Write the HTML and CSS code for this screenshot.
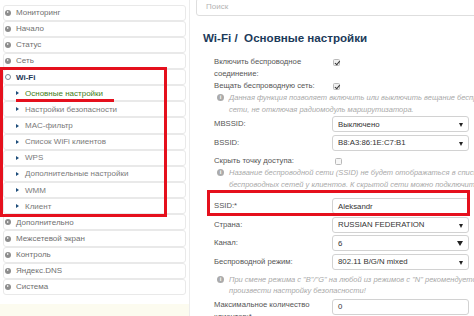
FILE: index.html
```html
<!DOCTYPE html>
<html lang="ru">
<head>
<meta charset="utf-8">
<title>Wi-Fi / Основные настройки</title>
<link rel="stylesheet" href="styles.css">
</head>
<body>
<div class="page">
  <nav class="sidebar">
    <div class="item top"><span class="ico-c"></span>Мониторинг</div>
    <div class="item top"><span class="ico-c"></span>Начало</div>
    <div class="item top"><span class="ico-c"></span>Статус</div>
    <div class="item top"><span class="ico-c"></span>Сеть</div>
    <div class="item top open"><span class="ico-c"></span>Wi-Fi</div>
    <div class="item sub active"><span class="ico-t"></span>Основные настройки</div>
    <div class="item sub"><span class="ico-t"></span>Настройки безопасности</div>
    <div class="item sub"><span class="ico-t"></span>MAC-фильтр</div>
    <div class="item sub"><span class="ico-t"></span>Список WiFi клиентов</div>
    <div class="item sub"><span class="ico-t"></span>WPS</div>
    <div class="item sub"><span class="ico-t"></span>Дополнительные настройки</div>
    <div class="item sub"><span class="ico-t"></span>WMM</div>
    <div class="item sub"><span class="ico-t"></span>Клиент</div>
    <div class="item top"><span class="ico-c"></span>Дополнительно</div>
    <div class="item top"><span class="ico-c"></span>Межсетевой экран</div>
    <div class="item top"><span class="ico-c"></span>Контроль</div>
    <div class="item top"><span class="ico-c"></span>Яндекс.DNS</div>
    <div class="item top"><span class="ico-c"></span>Система</div>
    <div class="side-foot"></div>
  </nav>
  <main class="content">
    <div class="search">Поиск</div>
    <h1 class="title">Wi-Fi /&nbsp; Основные настройки</h1>

    <div class="row r1">
      <div class="label">Включить беспроводное<br>соединение:</div>
      <div class="field"><span class="cb checked"></span></div>
    </div>
    <div class="row r2">
      <div class="label">Вещать беспроводную сеть:</div>
      <div class="field"><span class="cb checked"></span></div>
    </div>
    <div class="info i1"><span class="ii">i</span><p>Данная функция позволяет включить или выключить вещание беспроводной<br>сети, не отключая радиомодуль маршрутизатора.</p></div>

    <div class="row sel first">
      <div class="label">MBSSID:</div>
      <div class="select">Выключено<span class="arr"></span></div>
    </div>
    <div class="row sel">
      <div class="label">BSSID:</div>
      <div class="select">B8:A3:86:1E:C7:B1<span class="arr"></span></div>
    </div>
    <div class="row r-hide">
      <div class="label">Скрыть точку доступа:</div>
      <div class="field"><span class="cb off"></span></div>
    </div>
    <div class="info i2"><span class="ii">i</span><p>Название беспроводной сети (SSID) не будет отображаться в списке доступных<br>беспроводных сетей у клиентов. К скрытой сети можно подключиться, только<br>указав SSID вручную на беспроводном устройстве.</p></div>

    <div class="row sel ssid">
      <div class="label">SSID:*</div>
      <div class="select input">Aleksandr</div>
    </div>
    <div class="row sel">
      <div class="label">Страна:</div>
      <div class="select">RUSSIAN FEDERATION<span class="arr"></span></div>
    </div>
    <div class="row sel">
      <div class="label">Канал:</div>
      <div class="select">6<span class="arr big"></span></div>
    </div>
    <div class="row sel">
      <div class="label">Беспроводной режим:</div>
      <div class="select">802.11 B/G/N mixed<span class="arr"></span></div>
    </div>
    <div class="info i3"><span class="ii">i</span><p>При смене режима с "B"/"G" на любой из режимов с "N" рекомендуется<br>произвести настройку безопасности!</p></div>
    <div class="row r-max">
      <div class="label">Максимальное количество<br>клиентов:*</div>
      <div class="select input">0</div>
    </div>
  </main>

  <div class="mark mark-menu"></div>
  <div class="mark-line"></div>
  <div class="mark mark-ssid"></div>
</div>
</body>
</html>
```

FILE: styles.css
```css
* { box-sizing: border-box; }
html, body { margin: 0; padding: 0; background: #fff; }
body {
  font-family: "Liberation Sans", Arial, sans-serif;
  color: #555;
  width: 474px;
  height: 316px;
  overflow: hidden;
}
.page {
  position: relative;
  display: flex;
  width: 474px;
  height: 316px;
  overflow: hidden;
}

/* ---------- sidebar ---------- */
.sidebar {
  width: 190px;
  flex: none;
  border-right: 1px solid #ececec;
  padding: 4.5px 3px 0 3px;
  display: flex;
  flex-direction: column;
}
.item {
  height: 16.25px;
  border: 1px solid #e9e9e9;
  border-radius: 3px;
  display: flex;
  align-items: center;
  font-size: 8px;
  color: #707070;
  white-space: nowrap;
}
.item.top { padding-left: 1px; }
.item.sub { padding-left: 12px; color: #7a7a7a; }
.ico-c {
  width: 6px; height: 6px;
  border-radius: 50%;
  background: #8d8d8d;
  margin-right: 5px;
  position: relative;
  flex: none;
}
.ico-c::after {
  content: "";
  position: absolute;
  left: 2px; top: 1.5px;
  border-left: 2.5px solid #fff;
  border-top: 1.5px solid transparent;
  border-bottom: 1.5px solid transparent;
}
.item.open { font-weight: bold; color: #1e3656; }
.item.open .ico-c { background: #fff; border: 1.5px solid #7d8a98; }
.item.open .ico-c::after { display: none; }
.ico-t {
  width: 0; height: 0;
  border-left: 3px solid #1d4c7a;
  border-top: 2px solid transparent;
  border-bottom: 2px solid transparent;
  margin-right: 6px;
  flex: none;
}
.item.active { color: #3f7d17; }
.side-foot {
  margin-top: 9px;
  height: 12px;
  background: #fcfbef;
  margin-left: -3px;
  margin-right: -3px;
}

/* ---------- content ---------- */
.content {
  flex: 1;
  padding-left: 6px;
  min-width: 0;
}
.search {
  height: 18px;
  margin-top: -2px;
  margin-right: -6px;
  border: 1px solid #dedede;
  border-radius: 3px;
  font-size: 8px;
  color: #b3b3b3;
  padding: 3px 0 0 9px;
}
.title {
  margin: 14px 0 0 7px;
  height: 16px;
  line-height: 16px;
  font-size: 11.6px;
  font-weight: bold;
  color: #1c3a5a;
  white-space: nowrap;
}
.row {
  display: grid;
  grid-template-columns: 118px 137px;
  padding-left: 18px;
  font-size: 7.7px;
  color: #555;
}
.label { line-height: 12px; white-space: nowrap; }
.r1 { margin-top: 10px; height: 24px; }
.r2 { height: 12px; }
.field { display: flex; align-items: flex-start; }
.cb {
  width: 7px; height: 7px;
  margin-top: 2.5px;
  border: 1px solid #b9b9b9;
  border-radius: 1.5px;
  background: #f0f0f0;
  position: relative;
}
.cb.checked { margin-left: 1px; }
.cb.checked::after {
  content: "";
  position: absolute;
  left: 1.5px; top: 0;
  width: 2px; height: 3.5px;
  border-right: 1.3px solid #333;
  border-bottom: 1.3px solid #333;
  transform: rotate(40deg);
}
.cb.off { margin-left: 3px; background: #f7f7f7; }

.info {
  display: flex;
  padding-left: 21px;
  font-size: 7.5px;
  font-style: italic;
  color: #a9a9a9;
  white-space: nowrap;
}
.info p { margin: 0; line-height: 11.5px; }
.ii {
  flex: none;
  width: 7px; height: 7px;
  margin-top: 2px;
  margin-right: 5px;
  border-radius: 50%;
  background: #ababab;
  color: #fff;
  font-size: 6px;
  font-style: normal;
  font-weight: bold;
  line-height: 7px;
  text-align: center;
}
.i1 { height: 24px; }
.i2 { height: 25px; overflow: hidden; }
.i2 p { line-height: 12px; }
.i3 { margin-top: 4px; height: 24px; }

.row.sel { height: 16px; align-items: center; margin-top: 2.5px; }
.row.sel.first { margin-top: 0; }
.r-hide { margin-top: 4.5px; height: 12px; }
.row.ssid { margin-top: 6px; }
.select {
  height: 16px;
  border: 1px solid #d2d2d2;
  border-radius: 3px;
  background: #fff;
  color: #333;
  font-size: 7.8px;
  padding-left: 5px;
  display: flex;
  align-items: center;
  position: relative;
  white-space: nowrap;
}
.arr {
  position: absolute;
  right: 5px; top: 6px;
  border-top: 4px solid #222;
  border-left: 2.5px solid transparent;
  border-right: 2.5px solid transparent;
}
.arr.big { border-top-width: 5px; border-left-width: 3px; border-right-width: 3px; top: 5px; }
.r-max { height: 24px; margin-top: 1px; }
.r-max .select { align-self: start; }

/* ---------- red annotation marks ---------- */
.mark {
  position: absolute;
  border: 3px solid #e5101d;
  pointer-events: none;
}
.mark-menu { left: 0; top: 67px; width: 167px; height: 150px; }
.mark-ssid { left: 207px; top: 190px; width: 263px; height: 26px; }
.mark-line {
  position: absolute;
  left: 16px; top: 99px;
  width: 98px; height: 3px;
  background: #e5101d;
}
```
